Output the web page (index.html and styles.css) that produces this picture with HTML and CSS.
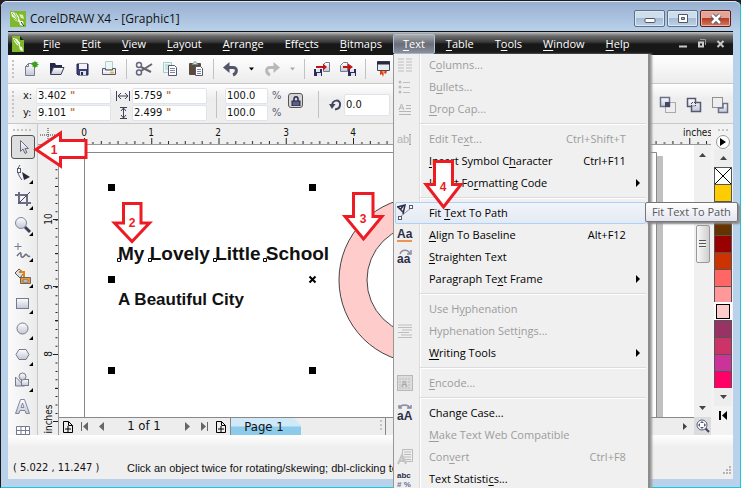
FILE: index.html
```
<!DOCTYPE html>
<html lang="en">
<head>
<meta charset="utf-8">
<title>CorelDRAW X4 - [Graphic1]</title>
<link rel="stylesheet" href="styles.css">
</head>
<body>
<svg class="defs" width="0" height="0" aria-hidden="true">
  <defs>
    <linearGradient id="steel" x1="0" y1="0" x2="0" y2="1"><stop offset="0" stop-color="#fff"/><stop offset="1" stop-color="#c3c6d4"/></linearGradient>
    <symbol id="logo" viewBox="0 0 16 16"><rect width="16" height="16" fill="#7db928"/><path d="M1 1l5 1 3 4 1 5-4-1-4-4z" fill="#fff"/><path d="M2 2l6 7M5 2l3 6M2 6l6 4" stroke="#7db928" fill="none"/><path d="M9 3l4 1 1 4-3-1z" fill="#dff0bd"/><path d="M9 10l4 0 1 5-4-1z" fill="#fff"/><path d="M11 11l3 4" stroke="#222"/></symbol>
    <symbol id="down" viewBox="0 0 7 4"><path d="M0 0h7L3.500 4z"/></symbol>
    <symbol id="pageadd" viewBox="0 0 10 12"><path d="M.5.5h5l4 4v7H.5zM5.500.5v4h4M5 5v6M2 8h6" fill="none" stroke="#000"/></symbol>
  </defs>
</svg>
<div class="window">
  <header class="titlebar">
    <svg class="logo" width="16" height="16"><use href="#logo"/></svg>
    <h1>CorelDRAW X4 - [Graphic1]</h1>
    <div class="winbuttons">
      <button aria-label="Minimize"><svg width="12" height="12"><rect x="1" y="5.500" width="10" height="4" rx="1" fill="#fff" stroke="#535666"/></svg></button>
      <button aria-label="Maximize"><svg width="12" height="12"><path d="M1.500 1.500h9v8h-9z" fill="#fff" stroke="#535666"/><path d="M4.500 4.500h3v2h-3z" fill="#9db6d4" stroke="#535666"/></svg></button>
      <button class="close" aria-label="Close"><svg width="12" height="12"><path d="M2 2l8 8M10 2l-8 8" stroke="#535666" stroke-width="4.500"/><path d="M2 2l8 8M10 2l-8 8" stroke="#fff" stroke-width="2.500"/></svg></button>
    </div>
  </header>

  <div class="client">
    <nav class="menubar">
      <svg class="doclogo" width="12" height="16" viewBox="0 0 12 16"><path d="M0 0h8l4 4v12H0z" fill="#7db928"/><path d="M1 2l4 1 3 4 0 3-3-1-3-4z" fill="#fff"/><path d="M2 3l5 6" stroke="#7db928"/><path d="M7 10l3 1 1 4-3-1z" fill="#fff"/><path d="M8 0l4 4H8z" fill="#222"/></svg>
      <ul>
        <li><button><u>F</u>ile</button></li>
        <li><button><u>E</u>dit</button></li>
        <li><button><u>V</u>iew</button></li>
        <li><button><u>L</u>ayout</button></li>
        <li><button><u>A</u>rrange</button></li>
        <li><button>Effe<u>c</u>ts</button></li>
        <li><button><u>B</u>itmaps</button></li>
        <li class="open"><button><u>T</u>ext</button>
          <div class="menu" role="menu">
            <button disabled><svg width="16" height="14"><path d="M1 1h6M1 4h6M1 7h6M1 10h6M1 13h6M9 1h6M9 4h6M9 7h6M9 10h6M9 13h6" stroke="#bdbdbd"/></svg><span>C<u>o</u>lumns...</span></button>
            <button disabled><svg width="16" height="14"><g fill="#bdbdbd"><circle cx="3" cy="2" r="1.500"/><circle cx="3" cy="7" r="1.500"/><circle cx="3" cy="12" r="1.500"/></g><path d="M6 2.500h7M6 7.500h7M6 12.500h7" stroke="#bdbdbd"/></svg><span>B<u>u</u>llets...</span></button>
            <button disabled><svg width="16" height="14"><path d="M2 8l2.500-6L7 8M3 6h3M9 3.500h5M9 6.500h5M2 9.500h12M2 12.500h12" stroke="#b5b5b5" fill="none"/></svg><span><u>D</u>rop Cap...</span></button>
            <hr>
            <button disabled><svg width="16" height="14"><text x="0" y="11" class="glyph soft">ab</text><path d="M13 3v9M12 2.500h2M12 12.500h2" stroke="#a5a5a5"/></svg><span>Edit Te<u>x</u>t...</span><kbd>Ctrl+Shift+T</kbd></button>
            <button><i></i><span><u>I</u>nsert Symbol C<u>h</u>aracter</span><kbd>Ctrl+F11</kbd></button>
            <button class="sub"><i></i><span>I<u>n</u>sert Fo<u>r</u>matting Code</span></button>
            <hr>
            <button class="active"><svg width="16" height="17"><path d="M3 13L14 4" stroke="#8a8ca3" fill="none"/><rect x="1.500" y="12.500" width="3" height="3" fill="#fff" stroke="#555a75"/><rect x="12.500" y="1.500" width="3" height="3" fill="#fff" stroke="#555a75"/><path d="M0 3l8-2-2 9M1 3l5 5M6 2L3 6" stroke="#2c2e48" stroke-width="1.500" fill="none"/></svg><span>Fit <u>T</u>ext To Path</span><em class="tooltip">Fit Text To Path</em></button>
            <button><svg width="16" height="16"><text x="0" y="11" class="glyph big">Aa</text><path d="M0 14h15" stroke="#e87722" stroke-width="1.500"/></svg><span><u>A</u>lign To Baseline</span><kbd>Alt+F12</kbd></button>
            <button><svg width="16" height="16"><path d="M3 5c2-5 8-5 10 0M14 1v4h-4" stroke="#8a8ca3" stroke-width="1.500" fill="none"/><text x="0" y="14" class="glyph big">aa</text></svg><span><u>S</u>traighten Text</span></button>
            <button class="sub"><i></i><span>Paragraph Te<u>x</u>t Frame</span></button>
            <hr>
            <button disabled><i></i><span>Use H<u>y</u>phenation</span></button>
            <button disabled><svg width="16" height="14"><path d="M1 1h14M1 3.500h14M5 6h10M1 8.500h11M4 11h11M1 13.500h14" stroke="#bdbdbd"/></svg><span>Hyphenation Sett<u>i</u>ngs...</span></button>
            <button class="sub"><i></i><span><u>W</u>riting Tools</span></button>
            <hr>
            <button disabled><svg width="16" height="16"><rect x=".5" y=".5" width="15" height="15" fill="#dcdcdc" stroke="#b8b8b8"/><path d="M2 4h12M2 7h12M2 10h12M2 13h12" stroke="#bbb" stroke-dasharray="2 1"/><text x="4" y="12" class="glyph pale">A</text></svg><span><u>E</u>ncode...</span></button>
            <hr>
            <button><svg width="16" height="17"><path d="M2 4c2-4 9-4 11 0M2 1v3h3M14 1v3h-4" stroke="#8a8ca3" stroke-width="1.500" fill="none"/><text x="0" y="16" class="glyph big">aA</text></svg><span>Chan<u>g</u>e Case...</span></button>
            <button disabled><i></i><span><u>M</u>ake Text Web Compatible</span></button>
            <button disabled><svg width="16" height="16"><path d="M5.500.5h10v12h-10zM7 3h7M7 5.500h7M7 8h7M7 10.500h7" stroke="#bbb" fill="#eee"/><path d="M1 15l4-9 4 9M3 12h5" stroke="#c4c4c4" stroke-width="2" fill="none"/></svg><span>Con<u>v</u>ert</span><kbd>Ctrl+F8</kbd></button>
            <button><svg width="16" height="18"><text x="0" y="8" class="glyph small">abc</text><text x="0" y="17" class="glyph small blue"># %</text></svg><span>Text Statisti<u>c</u>s...</span></button>
          </div>
        </li>
        <li><button><u>T</u>able</button></li>
        <li><button>T<u>o</u>ols</button></li>
        <li><button><u>W</u>indow</button></li>
        <li><button><u>H</u>elp</button></li>
      </ul>
      <div class="docbuttons">
        <button aria-label="Minimize document"><svg width="9" height="9"><path d="M1 7.500h8" stroke="#c8c8c8" stroke-width="2"/></svg></button>
        <button aria-label="Restore document"><svg width="9" height="9"><path d="M3 .5h5.500V6" stroke="#999" fill="none"/><path d="M2 3.500h4v4H2z" stroke="#ccc" stroke-width="2" fill="none"/></svg></button>
        <button aria-label="Close document"><svg width="9" height="9"><path d="M1.500 2l6 6M7.500 2l-6 6" stroke="#c8c8c8" stroke-width="2"/></svg></button>
      </div>
    </nav>

    <div class="toolbar" role="toolbar">
      <span class="grip"></span>
      <button aria-label="New"><svg width="16" height="16"><path d="M2.500 5.500l3-3h6v12h-9z" fill="url(#steel)" stroke="#777b91"/><path d="M2.500 5.500h3v-3" fill="none" stroke="#777b91"/><circle cx="12" cy="3.500" r="2.500" fill="#2f9a10"/><path d="M12 0v7M8.500 3.500h7M9.500 1l5 5M14.500 1l-5 5" stroke="#3ca516"/></svg></button>
      <button aria-label="Open"><svg width="16" height="16"><path d="M1 2h5l1 2h6v3H4L2 13H1z" fill="#25284a"/><path d="M4.500 6.500h10.500l-3 7H1.500z" fill="url(#steel)" stroke="#3a3d5c"/></svg></button>
      <button aria-label="Save"><svg width="14" height="14"><path d="M1 2h11v11H2l-1-1z" fill="#3b3f78" stroke="#23264d"/><rect x="3" y="2" width="8" height="5" fill="#f3f3f7"/><rect x="4" y="9" width="6" height="4" fill="#dfe0ea"/><rect x="5" y="10" width="2" height="3" fill="#23264d"/></svg></button>
      <button aria-label="Print"><svg width="16" height="16"><path d="M4.500.5h7v8h-7z" fill="#eef6f6" stroke="#a9cfcf"/><path d="M1.500 7.500h3V9h7V7.500h3v6h-13z" fill="#e8e8ee" stroke="#555970"/><path d="M2 10.500h12" stroke="#fff"/><path d="M9 11.500h4" stroke="#d8c13a" stroke-width="2"/></svg></button>
      <span class="sep"></span>
      <button aria-label="Cut"><svg width="18" height="16"><g fill="none" stroke="#63667e" stroke-width="1.500"><circle cx="4" cy="4" r="2.500"/><circle cx="4" cy="11.500" r="2.500"/></g><path d="M6 6l10 5M6 10l11-7" stroke="#65656d" stroke-width="2"/></svg></button>
      <button aria-label="Copy"><svg width="16" height="16"><path d="M1.500 1.500h8v10h-8zM3 4h5M3 6h5M3 8h5" fill="#eef5f5" stroke="#a7cccc"/><path d="M6.500 4.500h6l2 2v8h-8z" fill="#fff" stroke="#55586f"/><path d="M8 7.500h5M8 9.500h5M8 11.500h5" stroke="#8386a0"/></svg></button>
      <button aria-label="Paste"><svg width="16" height="16"><rect x="1" y="2" width="12" height="12" rx="1" fill="#5b4a3a"/><path d="M4 3.500L7 .5l3 3z" fill="#e7eef0" stroke="#6a9292"/><path d="M7.500 5.500h5l2 2v7h-7z" fill="#fff" stroke="#55586f"/><path d="M9 8.500h4M9 10.500h4M9 12.500h4" stroke="#8386a0"/></svg></button>
      <span class="sep"></span>
      <button aria-label="Undo"><svg width="16" height="16"><path d="M3 6.500h7c5 0 4 6 0 7.500" fill="none" stroke="#55566a" stroke-width="3"/><path d="M0 6.500L6.500 1v11z" fill="#55566a"/></svg></button>
      <button class="drop" aria-label="Undo list"><svg width="5" height="4"><use href="#down"/></svg></button>
      <button aria-label="Redo"><svg width="16" height="16"><path d="M13 6.500H6c-5 0-4 6 0 7.500" fill="none" stroke="#b9b9b9" stroke-width="3"/><path d="M16 6.500L9.500 1v11z" fill="#b9b9b9"/></svg></button>
      <button class="drop off" aria-label="Redo list"><svg width="5" height="4"><use href="#down"/></svg></button>
      <span class="sep"></span>
      <button aria-label="Import"><svg width="18" height="16"><path d="M10.500 3.500l2-2h4v9h-6z" fill="url(#steel)" stroke="#777b91"/><path d="M1 8h8v7H1z" fill="#2b2d58"/><path d="M3 8h4v3H3zM4 12h4v3H4z" fill="#e5e5ef"/><path d="M3 5h7V2.500L14 6l-4 3.500V7H3z" fill="#c31414"/></svg></button>
      <button aria-label="Export"><svg width="18" height="16"><path d="M1.500 4.500l3-3h4v9h-7z" fill="url(#steel)" stroke="#777b91"/><path d="M9 8h8v7H9z" fill="#2b2d58"/><path d="M11 8h4v3h-4zM12 12h4v3h-4z" fill="#e5e5ef"/><path d="M4 5h5V2.500L14 6 9 9.500V7H4z" fill="#c31414"/></svg></button>
      <span class="sep"></span>
      <button aria-label="Application launcher"><svg width="16" height="16"><path d="M2.500.5h12v9h-12z" fill="#e8eaf2" stroke="#43465f"/><path d="M2 2h13" stroke="#26293f" stroke-width="3"/><path d="M5 10h7l-1 3-2-1-1 4-1-3-2 1z" fill="#e8391a"/><path d="M7 10h3l-1.500 3z" fill="#f7a531"/></svg></button>
    </div>

    <div class="propbar">
      <span class="grip tall"></span>
      <div class="pair">
        <label class="field"><b>x:</b><span class="box"><input value="3.402"><i>"</i></span></label>
        <label class="field"><b>y:</b><span class="box"><input value="9.101"><i>"</i></span></label>
      </div>
      <div class="pair">
        <label class="field"><svg class="dim" width="14" height="10" aria-label="Width"><path d="M.5 0v10M13.500 0v10M2 5h10M5 2L2 5l3 3M9 2l3 3-3 3" stroke="#3e4157" fill="none"/></svg><span class="box"><input value="5.759"><i>"</i></span></label>
        <label class="field"><svg class="dim" width="14" height="12" aria-label="Height"><path d="M4 .5h7M4 11.500h7M7.500 1v10M5 4l2.500-3L10 4M5 8l2.500 3L10 8" stroke="#3e4157" fill="none"/></svg><span class="box"><input value="2.499"><i>"</i></span></label>
      </div>
      <span class="sep"></span>
      <div class="pair scale">
        <label class="field"><span class="box"><input value="100.0"></span><b>%</b></label>
        <label class="field"><span class="box"><input value="100.0"></span><b>%</b></label>
      </div>
      <button class="lock" aria-label="Lock ratio"><svg width="10" height="10"><path d="M3 5V3c0-3 4-3 4 0v2" fill="none" stroke="#2b2e4a" stroke-width="1.500"/><rect x="1" y="5" width="8" height="5" fill="#5b5f88" stroke="#22253d"/></svg></button>
      <span class="sep"></span>
      <label class="field angle"><svg width="13" height="12" aria-label="Angle"><path d="M3 7C3 0 12 0 11 6c0 3-2 4-5 4.500" fill="none" stroke="#43465f" stroke-width="2"/><path d="M0 5h6.500L3 10z" fill="#43465f"/></svg><span class="box"><input value="0.0"></span></label>
      <div class="shaping">
        <button aria-label="Trim"><svg width="18" height="18"><path d="M1.500 1.500h10v10h-10zM6.500 6.500h10v10h-10z" fill="url(#steel)" stroke="#444864"/></svg></button>
        <button aria-label="Intersect"><svg width="18" height="18"><path d="M1.500 1.500h9v9h-9z" fill="url(#steel)" stroke="#6c6f88" stroke-width="1.500"/><path d="M6.500 6.500h10v10h-10z" fill="none" stroke="#666" stroke-dasharray="1 1"/><path d="M6 6h5v5H6z" fill="#444864"/></svg></button>
        <button aria-label="Simplify"><svg width="18" height="18"><path d="M2.500 2.500h8v4h5v9h-9v-5h-4z" fill="url(#steel)" stroke="#555975" stroke-width="1.500"/><path d="M6.500 10v-3.500h4V10h-4" fill="none" stroke="#444" stroke-dasharray="1 1"/></svg></button>
        <button aria-label="Front minus back"><svg width="18" height="18"><path d="M1.500 1.500h10v10h-10z" fill="none" stroke="#333" stroke-dasharray="1 1"/><path d="M12 7.500h4.500v9h-9V12H12z" fill="url(#steel)" stroke="#6c6f88" stroke-width="1.500"/></svg></button>
      </div>
    </div>

    <main class="workspace">
      <aside class="toolbox">
        <span class="grip flat"></span>
        <button class="picked" aria-label="Pick"><svg width="18" height="18"><path d="M6.500 2.500v11l2.500-2.500 2 4.500 2-1-2-4h3.500z" fill="url(#steel)" stroke="#6b6e82"/></svg></button>
        <button class="fly" aria-label="Shape"><svg width="18" height="18"><path d="M6 1C2 6 4 11 8 16" fill="none" stroke="#55586e"/><rect x="3.500" y="4.500" width="3" height="4" fill="#fff" stroke="#55586e"/><path d="M8 8l8 5-6 3z" fill="#26283c"/></svg></button>
        <button class="fly" aria-label="Crop"><svg width="18" height="18"><path d="M5 2v11h12M1 5h12v11" fill="none" stroke="#6a6d84" stroke-width="2"/><path d="M4 14L16 2" stroke="#44475e"/></svg></button>
        <button class="fly" aria-label="Zoom"><svg width="18" height="18"><circle cx="7" cy="7" r="5.500" fill="url(#steel)" stroke="#83869b"/><path d="M11 11l5 5" stroke="#3c3f55" stroke-width="3"/></svg></button>
        <button class="fly" aria-label="Freehand"><svg width="18" height="18"><path d="M4 1v7M.5 4.500h7" stroke="#777a90"/><path d="M3 14c3-4 4-4 4-1s2 3 4 0 2 3 5 1" fill="none" stroke="#6a6d84" stroke-width="1.500"/></svg></button>
        <button class="fly" aria-label="Smart fill"><svg width="18" height="18"><path d="M1 5l4-4 5 4-4 5z" fill="#ddd" stroke="#555"/><path d="M5 4h5v7" stroke="#e6820f" stroke-width="2" fill="none"/><path d="M6.500 9.500h10v6h-10z" fill="#ee972f" stroke="#666"/><path d="M9 12h5v2H9z" fill="#fff" stroke="#777"/></svg></button>
        <button class="fly" aria-label="Rectangle"><svg width="18" height="18"><rect x="2.500" y="4.500" width="12" height="10" fill="url(#steel)" stroke="#777a8e"/></svg></button>
        <button class="fly" aria-label="Ellipse"><svg width="18" height="18"><circle cx="8.500" cy="8.500" r="5.500" fill="url(#steel)" stroke="#777a8e"/></svg></button>
        <button class="fly" aria-label="Polygon"><svg width="18" height="18"><path d="M2 8.500L5 3.500h7l3 5-3 5H5z" fill="url(#steel)" stroke="#777a8e"/></svg></button>
        <button class="fly" aria-label="Basic shapes"><svg width="18" height="18"><path d="M1.500 5l9 9h-9z" fill="url(#steel)" stroke="#777a8e"/><rect x="7.500" y="7.500" width="7" height="6" fill="url(#steel)" stroke="#777a8e"/><circle cx="8.500" cy="4.500" r="3.500" fill="url(#steel)" stroke="#777a8e"/></svg></button>
        <button aria-label="Text"><svg width="18" height="18"><path d="M1.500 15.500l5-14h4l5 14H12l-1-3H6l-1 3zM7 9.500h3L8.500 5z" fill="url(#steel)" stroke="#8386a0"/></svg></button>
        <button aria-label="Table"><svg width="18" height="18"><path d="M2.500 2.500h13v13h-13zM2.500 6.500h13M2.500 10.500h13M7 2v13M11.500 2v13" fill="#fff" stroke="#777a8e"/></svg></button>
      </aside>

      <section class="document">
        <svg class="hruler" height="21">
          <defs>
            <pattern id="ticksx" x="46" width="67.250" height="21" patternUnits="userSpaceOnUse"><path d="M.5 14v6M34 17v3" stroke="#222"/><path d="M8.900 18v2M17.300 17v3M25.700 18v2M42.500 18v2M50.900 17v3M59.300 18v2" stroke="#222"/></pattern>
          </defs>
          <path d="M10 4v14M2 11h16" stroke="#333" stroke-dasharray="1 1"/>
          <rect x="21" width="653" height="21" fill="url(#ticksx)"/>
          <g text-anchor="middle"><text x="46" y="12">0</text><text x="113" y="12">1</text><text x="180" y="12">2</text><text x="248" y="12">3</text><text x="315" y="12">4</text></g>
          <text x="645" y="12">inches</text>
        </svg>
        <svg class="vruler" width="21">
          <path d="M15 7.500h5M15 74.500h5M15 141.500h5M15 209.500h5M15 276.500h5" stroke="#222"/>
          <path d="M18.500 15.900v258" stroke="#222" stroke-width="2" stroke-dasharray="1 7.400"/>
          <path d="M17 41.500h3M17 108.500h3M17 175.500h3M17 243.500h3" stroke="#222"/>
          <g text-anchor="middle"><text transform="translate(14 74) rotate(-90)">10</text><text transform="translate(14 142) rotate(-90)">9</text><text transform="translate(14 209) rotate(-90)">8</text><text transform="translate(14 274) rotate(-90)">inches</text></g>
        </svg>
        <div class="canvas">
          <svg width="640" height="274" viewBox="59 145 640 274">
            <path d="M657 156h6v263h-6z" fill="#c0c0c0"/>
            <path d="M59 152.500h597.500V419M84.500 145v274" stroke="#888" fill="none"/>
            <circle cx="422" cy="280" r="69" stroke="#ffcccc" stroke-width="28" fill="none"/>
            <circle cx="422" cy="280" r="83" stroke="#444" fill="none"/><circle cx="422" cy="280" r="55" stroke="#444" fill="none"/>
            <text x="118" y="260" class="art large">My Lovely Little School</text>
            <text x="118" y="305" class="art">A Beautiful City</text>
            <path d="M108 184h7v7h-7zM309 184h7v7h-7zM108 276h7v7h-7zM108 367h7v7h-7zM309 367h7v7h-7z"/>
            <path d="M309.500 276.500l6 6M315.500 276.500l-6 6" stroke="#000" stroke-width="2"/>
            <path d="M117.500 258.500h3v3h-3zM148.500 258.500h3v3h-3zM213.500 258.500h3v3h-3zM263.500 258.500h3v3h-3z" fill="#fff" stroke="#000"/>
          </svg>
        </div>
        <div class="vscroll">
          <svg width="7" height="4"><path d="M0 4h7L3.500 0z" fill="#444"/></svg>
          <span class="thumb"></span>
          <svg width="7" height="4" fill="#444"><use href="#down"/></svg>
        </div>
        <div class="pagenav">
          <button aria-label="Add page before"><svg width="10" height="12"><use href="#pageadd"/></svg></button>
          <button aria-label="First page"><svg width="8" height="9"><path d="M.5 0v9" stroke="#666"/><path d="M7 0v9L2 4.500z" fill="#666"/></svg></button>
          <button aria-label="Previous page"><svg width="8" height="9"><path d="M6 0v9L1 4.500z" fill="#666"/></svg></button>
          <span class="count">1 of 1</span>
          <button aria-label="Next page"><svg width="8" height="9"><path d="M2 0v9l5-4.500z" fill="#666"/></svg></button>
          <button aria-label="Last page"><svg width="8" height="9"><path d="M7.500 0v9" stroke="#666"/><path d="M1 0v9l5-4.500z" fill="#666"/></svg></button>
          <button aria-label="Add page after"><svg width="10" height="12"><use href="#pageadd"/></svg></button>
          <button class="tab">Page 1</button>
          <span class="grip splitter"></span>
          <div class="hscroll"><svg width="4" height="7"><path d="M4 0v7L0 3.500z" fill="#444"/></svg><svg width="4" height="7"><path d="M0 0v7l4-3.500z" fill="#444"/></svg></div>
        </div>
        <button class="navigator" aria-label="Navigator"><svg width="14" height="14"><path d="M9 9l4 4" stroke="#3f4260" stroke-width="2"/><circle cx="6" cy="6" r="5" fill="#fff" stroke="#55597a"/><path d="M6 2l2 2H4zM6 10l2-2H4zM2 6l2-2v4zM10 6L8 4v4z" fill="#55597a"/></svg></button>
      </section>

      <aside class="palette">
        <span class="grip flat"></span>
        <button class="round" aria-label="Palette menu"><svg width="6" height="8"><path d="M0 0v8l6-4z"/></svg></button>
        <button class="scroll" aria-label="Scroll up"><svg width="7" height="4"><path d="M0 4h7L3.500 0z" fill="#444"/></svg></button>
        <div class="swatches">
          <button class="none" aria-label="No color"></button><button class="c1" aria-label="Yellow"></button><button class="c2" aria-label="Orange"></button><button class="c3" aria-label="Brown"></button><button class="c4" aria-label="Dark red"></button><button class="c5" aria-label="Rust"></button><button class="c6" aria-label="Coral"></button><button class="c7" aria-label="Salmon"></button><button class="c8" aria-label="Pink"></button><button class="c9" aria-label="Plum"></button><button class="c10" aria-label="Rose"></button><button class="c11" aria-label="Purple"></button><button class="c12" aria-label="Magenta"></button>
        </div>
        <button class="scroll" aria-label="Scroll down"><svg width="7" height="4" fill="#444"><use href="#down"/></svg></button>
        <button class="scroll plain" aria-label="Expand palette"><svg width="8" height="9"><path d="M1 0v9" stroke="#000" stroke-width="2"/><path d="M8 0v9L3 4.500z"/></svg></button>
      </aside>
    </main>

    <footer class="status"><span class="coords">( 5.022 , 11.247 )</span><span class="hint">Click an object twice for rotating/skewing; dbl-clicking to</span><svg class="sizer" width="9" height="9"><path d="M7 0h2v2H7zM4 3h2v2H4zM7 3h2v2H7zM1 6h2v2H1zM4 6h2v2H4zM7 6h2v2H7z" fill="#b5b5b5"/></svg></footer>
  </div>
</div>

<svg class="callouts" width="480" height="260">
  <g fill="#fff" stroke="#ed1c24" stroke-width="3">
    <path d="M36 149.500L60.500 133v7.500H86v17H60.500v8.500z"/>
    <path d="M123.500 203.500H141V223h8.500L132 241.500 114.500 223h9z"/>
    <path d="M353.500 193.500H373v23h9L363.500 239 345 216.500h8.500z"/>
    <path d="M434.500 161.500h18v23h8.500L443.500 207 426 184.500h8.500z"/>
  </g>
  <g text-anchor="middle"><text x="54" y="154">1</text><text x="132" y="227">2</text><text x="363" y="223">3</text><text x="443" y="191">4</text></g>
</svg>
</body>
</html>
```
FILE: styles.css
```
* { box-sizing: border-box; }
body { margin: 0; height: 100vh; overflow: hidden; position: relative; background: #222; font: 11px/16px "Open Sans", "Noto Sans", sans-serif; color: #111; }
button { padding: 0; border: 0; background: none; font: inherit; color: inherit; display: flex; align-items: center; justify-content: center; }
svg { display: block; flex: none; }
u { text-underline-offset: 2px; }
.defs { position: absolute; }

.window { display: flex; flex-direction: column; height: 100vh; padding: 0 7px 8px; border: 1px solid #1a1a1a; border-right-color: #19c8dc; border-bottom-color: #19c8dc; border-radius: 7px 7px 0 0; background: #b9d1ea; }
.titlebar { display: flex; align-items: center; height: 30px; margin: 0 -7px; padding: 4px 9px 0; background: linear-gradient(#98b0d0, #b9d1ea); border-radius: 6px 6px 0 0; border-top: 1px solid #dfe9f5; }
.titlebar h1 { flex: 1; margin: 0 0 0 4px; font-weight: 400; font-size: 12px; line-height: 16px; }
.winbuttons { display: flex; gap: 2px; }
.winbuttons button { width: 31px; height: 17px; border: 1px solid #5d7188; border-radius: 2px; background: linear-gradient(#cfdeed 45%, #a5bcd6 50%, #bfd3e8); box-shadow: inset 0 0 0 1px #dbe8f5; }
.winbuttons .close { border-color: #5b1b1b; background: linear-gradient(#e2a496 45%, #b73c28 50%, #d87a5c); box-shadow: inset 0 0 0 1px #e5b5a8; }
.client { flex: 1; display: flex; flex-direction: column; min-height: 0; background: #efefef; }

.menubar { display: flex; align-items: center; height: 24px; padding: 0 8px 0 4px; color: #fff; background: linear-gradient(#c4c4c4, #6a6a6a 4px, #3a3a3a 10px, #181818 12px); border-top: 1px solid #111; }
.menubar ul { display: flex; flex: 1; gap: 1px; margin: 0 0 0 9px; padding: 0; list-style: none; }
.menubar li { position: relative; }
.menubar li > button { height: 20px; padding: 0 9px; border: 1px solid transparent; border-radius: 2px; }
.menubar .open > button { border-color: #a9c3de; background: linear-gradient(#aaa, #6a6d78 50%, #8b8f9c); }
.docbuttons { display: flex; gap: 10px; }

.menu { position: absolute; z-index: 5; top: 20px; left: 0; width: 257px; padding: 0 2px 0 1px; color: #000; border: 1px solid #979797; border-width: 0 2px 1px 1px; border-right-color: #8c8c8c; background: linear-gradient(90deg, #efefef 25px, #dcdcdc 25px, #dcdcdc 26px, #fff 26px, #fff 27px, #f0f0f0 27px); box-shadow: 2px 0 2px #999; }
.menu button { position: relative; display: grid; grid-template-columns: 32px 1fr auto; justify-content: start; align-items: center; text-align: left; width: 100%; height: 22px; padding: 0 19px 0 1px; border: 1px solid transparent; border-radius: 2px; white-space: nowrap; }
.menu button:disabled { color: #9c9c9c; }
.menu kbd { font: inherit; }
.menu hr { height: 2px; margin: 3px 0 3px 25px; border: 0; border-top: 1px solid #dcdcdc; border-bottom: 1px solid #fff; }
.menu .active { border-color: #aecff7; background: linear-gradient(#f1f4f9, #e4eaf3); }
.menu .sub::after { content: ""; justify-self: end; margin-right: -14px; border: 4px solid transparent; border-left-color: #000; border-right: 0; }
.glyph { font: bold 9px "Liberation Sans", sans-serif; fill: #2c2e48; }
.glyph.big { font-size: 12px; }
.glyph.small { font-size: 8px; }
.glyph.blue { fill: #6b6e94; }
.glyph.soft { fill: #b5b5b5; font-weight: 400; font-size: 11px; }
.glyph.pale { fill: #a8a8a8; }
.tooltip { position: absolute; z-index: 6; left: 100%; top: -1px; height: 20px; padding: 1px 6px; border: 1px solid #767676; border-radius: 2px; font-style: normal; color: #575757; background: linear-gradient(#fff, #e4e5f0); box-shadow: 2px 2px 2px #888; }

.toolbar { display: flex; align-items: center; height: 29px; border-bottom: 1px solid #c8c8c8; background: linear-gradient(#fff, #ececec); }
.toolbar button { width: 26px; height: 24px; }
.toolbar .drop { width: 15px; }
.toolbar .off { fill: #aaa; }
.grip { display: block; width: 2px; height: 18px; margin: 0 4px; background: repeating-linear-gradient(#c4c4c4 0 2px, transparent 2px 4px); }
.grip.tall { height: 28px; margin: 0 9px 0 4px; }
.grip.flat { width: 19px; height: 2px; margin: 0 auto 4px; background: repeating-linear-gradient(90deg, #c4c4c4 0 2px, transparent 2px 4px); }
.sep { width: 1px; height: 20px; margin: 0 4px; background: #c2c2c2; }

.propbar { display: flex; align-items: center; height: 40px; padding-top: 2px; border-bottom: 1px solid #c8c8c8; background: linear-gradient(#fff, #eee 14px); font: 11px/14px "DejaVu Sans Condensed", "DejaVu Sans", sans-serif; }
.propbar .sep { height: 27px; margin: 0 8px; }
.pair { display: grid; gap: 1px; margin-right: 5px; }
.pair + .sep { margin-left: 4px; }
.field { display: flex; align-items: center; gap: 2px; }
.field b { font-weight: 400; width: 11px; }
.box { display: flex; width: 75px; height: 16px; padding: 0 1px; border: 1px solid #dfe3ec; border-radius: 2px; background: #fff; }
.box input { width: 32px; min-width: 0; padding: 0; border: 0; background: none; font: inherit; color: #111; outline: 0; }
.box i { font-style: normal; font-weight: bold; color: #b87436; }
.scale .box { width: 43px; }
.scale .field { gap: 4px; }
.scale b { color: #555a70; }
.lock { width: 15px; height: 15px; margin: 0 7px 8px 0; border: 1px solid #555; border-radius: 3px; background: #d5d5d8; }
.angle { margin-left: 2px; }
.angle .box { width: 46px; height: 22px; align-items: center; }
.shaping { display: flex; gap: 8px; margin-left: auto; padding-right: 4px; }

.workspace { flex: 1; display: flex; min-height: 0; }
.toolbox { width: 30px; padding-top: 5px; overflow: hidden; border-right: 1px solid #c8c8c8; background: linear-gradient(90deg, #fbfbfb, #ebebeb); }
.toolbox button { position: relative; width: 24px; height: 24px; margin: 0 auto 2px 3px; }
.toolbox .picked { border: 1px solid #555; border-radius: 3px; background: #dedede; }
.toolbox .fly::after { content: ""; position: absolute; right: 2px; bottom: 1px; border: 2px solid #000; border-top-color: transparent; border-left-color: transparent; }

.document { flex: 1; min-width: 0; display: grid; grid-template: 21px 1fr 18px / 21px 1fr 17px; }
.hruler { grid-area: 1 / 1 / 2 / 4; width: 100%; border-bottom: 1px solid #999; }
.vruler { grid-area: 2 / 1 / 4 / 2; height: 100%; border-right: 1px solid #999; }
.hruler text, .vruler text { font: 10px "DejaVu Sans Condensed", "DejaVu Sans", sans-serif; fill: #111; }
.canvas { overflow: hidden; min-width: 0; background: #fff; }
.art { font: bold 17px "Liberation Sans", Arial, sans-serif; fill: #111; }
.art.large { font-size: 19px; }
.vscroll { display: flex; flex-direction: column; align-items: center; justify-content: space-between; padding: 8px 0 7px; background: #f0f0f0; }
.thumb { width: 14px; height: 38px; margin-bottom: 76px; border: 1px solid #999; border-radius: 2px; background: repeating-linear-gradient(#555 0 1px, #eee 1px 3px) center / 7px 8px no-repeat, linear-gradient(90deg, #f8f8f8, #cfcfcf); }
.pagenav { display: flex; align-items: stretch; border-top: 1px solid #888; background: #ededed; font: 13px/16px "DejaVu Sans Condensed", "DejaVu Sans", sans-serif; white-space: nowrap; }
.pagenav button { width: 17px; }
.count { width: 68px; text-align: center; }
.pagenav .tab { width: 71px; margin-left: 1px; padding-right: 4px; border-left: 1px solid #888; background: linear-gradient(#cfe9f8 45%, #8ccbec 55%); clip-path: polygon(0 0, 64px 0, 100% 7px, 100% 100%, 0 100%); }
.grip.splitter { height: 12px; margin: 2px 3px 0 79px; }
.hscroll { flex: 1; display: flex; justify-content: space-between; align-items: center; padding: 0 7px; border-left: 1px solid #888; }
.navigator { background: #dcdcdc; }

.palette { width: 22px; padding: 5px 1px 0 3px; display: flex; flex-direction: column; align-items: stretch; background: #f3f3f3; }
.palette .grip.flat { width: 10px; }
.round { align-self: center; width: 14px; height: 14px; border: 1px solid #999; border-radius: 50%; background: #fff; }
.scroll { height: 18px; background: #ededed; }
.plain { background: none; }
.swatches { display: grid; grid-auto-rows: 17px; }
.swatches button { border: 1px solid #555; border-bottom-width: 0; }
.none { background: linear-gradient(45deg, transparent 47%, #000 48% 52%, transparent 53%), linear-gradient(-45deg, #fff 47%, #000 48% 52%, #fff 53%); }
.c1 { background: #fc0; } .c2 { background: #f90; } .c3 { background: #630; } .c4 { background: #900; } .c5 { background: #c30; } .c6 { background: #f66; } .c7 { background: #f99; }
.swatches .c8 { border: 1px solid #000; margin: 1px 2px; background: #fcc; outline: 2px solid #fff; }
.c9 { background: #936; } .c10 { background: #c36; } .c11 { background: #c39; } .c12 { background: #f06; }

.status { display: flex; align-items: flex-end; height: 44px; padding: 0 2px 4px 5px; background: linear-gradient(#fff, #efefef 12px); line-height: 14px; white-space: nowrap; }
.coords { width: 114px; font-family: "DejaVu Sans Condensed", "DejaVu Sans", sans-serif; }
.hint { flex: 1; font-family: "Liberation Sans", Arial, sans-serif; }

.callouts { position: absolute; z-index: 10; left: 0; top: 0; pointer-events: none; }
.callouts text { font: bold 12px "Liberation Sans", sans-serif; fill: #ed1c24; }
```
